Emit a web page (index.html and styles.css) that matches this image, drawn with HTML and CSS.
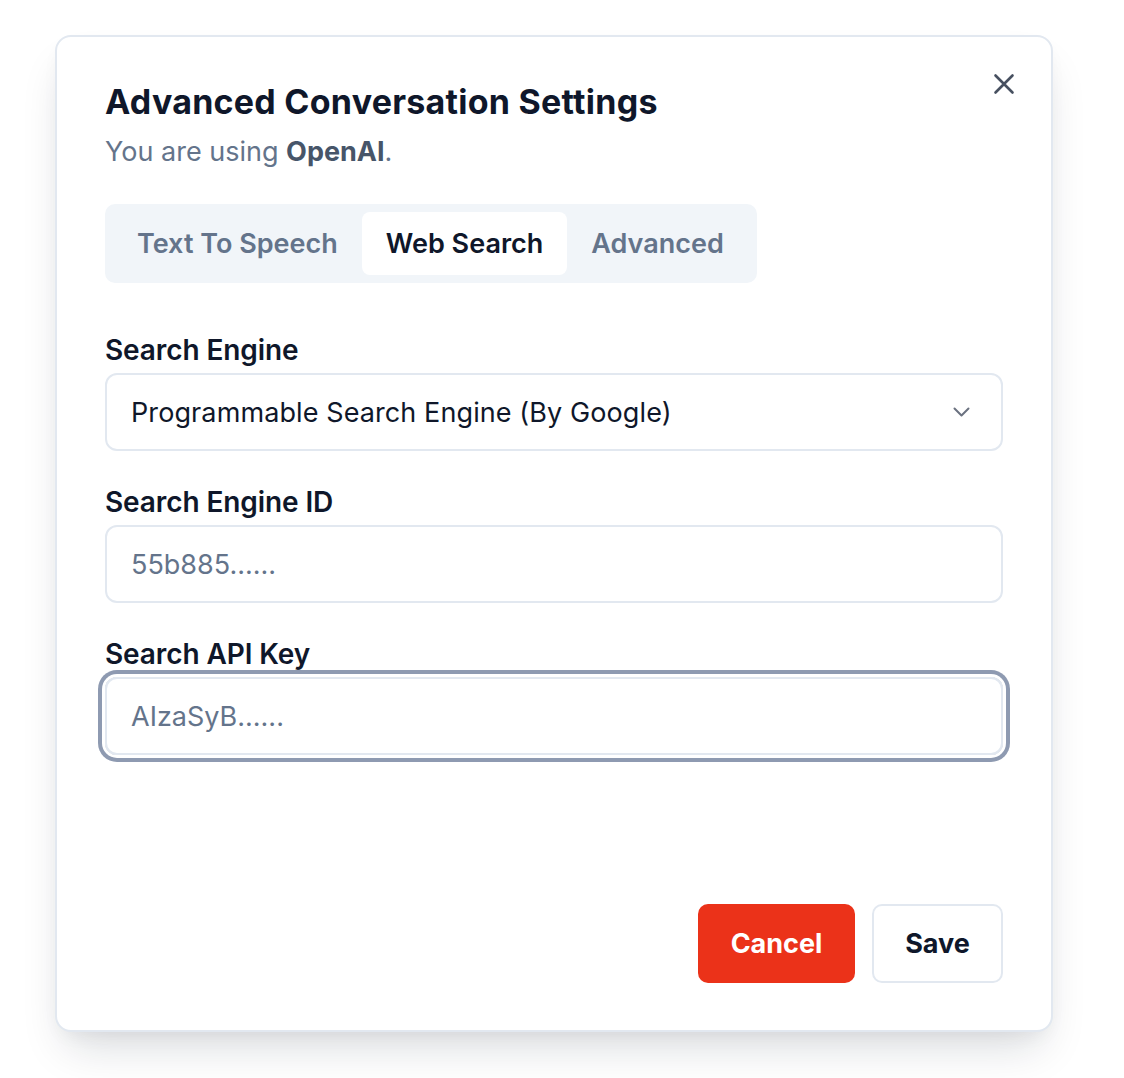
FILE: index.html
```html
<!DOCTYPE html>
<html lang="en">
<head>
<meta charset="utf-8">
<title>Advanced Conversation Settings</title>
<link rel="stylesheet" href="styles.css">
</head>
<body>
<div class="page">
  <div class="dialog">
    <button class="close" aria-label="Close">
      <svg width="22" height="22" viewBox="0 0 22 22" fill="none" stroke="currentColor" stroke-width="2.6" stroke-linecap="round"><path d="M2.5 2.5L19.5 19.5M19.5 2.5L2.5 19.5"/></svg>
    </button>
    <h1 class="title">Advanced Conversation Settings</h1>
    <p class="subtitle">You are using <strong>OpenAI</strong>.</p>
    <div class="tabs">
      <span class="tab">Text To Speech</span>
      <span class="tab tab-active">Web Search</span>
      <span class="tab">Advanced</span>
    </div>
    <div class="field">
      <label class="label">Search Engine</label>
      <div class="control select">
        <span class="value">Programmable Search Engine (By Google)</span>
        <svg class="chevron" width="17" height="10" viewBox="0 0 17 10" fill="none" stroke="currentColor" stroke-width="2" stroke-linecap="round" stroke-linejoin="round"><path d="M1.5 1.5L8.5 8.5L15.5 1.5"/></svg>
      </div>
    </div>
    <div class="field">
      <label class="label">Search Engine ID</label>
      <div class="control"><span class="placeholder">55b885......</span></div>
    </div>
    <div class="field">
      <label class="label">Search API Key</label>
      <div class="control focused"><span class="placeholder">AIzaSyB......</span></div>
    </div>
    <div class="actions">
      <button class="btn btn-cancel">Cancel</button>
      <button class="btn btn-save">Save</button>
    </div>
  </div>
</div>
</body>
</html>
```

FILE: styles.css
```css
* { box-sizing: border-box; }
html, body { margin: 0; padding: 0; background: #ffffff; }
body { font-family: Inter, "Noto Sans", "Liberation Sans", sans-serif; color: #0f172a; }

.page {
  padding: 35px 0 0 55px;
  height: 1078px;
}

.dialog {
  position: relative;
  width: 998px;
  height: 997px;
  background: #fff;
  border: 2px solid #e2e8f0;
  border-radius: 16px;
  padding: 45px 48px 47px 48px;
  display: flex;
  flex-direction: column;
  box-shadow: 0 25px 45px -12px rgba(15, 23, 42, 0.16), 0 8px 20px -6px rgba(15, 23, 42, 0.06);
}

.close {
  position: absolute;
  top: 33px;
  right: 33px;
  width: 28px;
  height: 28px;
  padding: 0;
  border: 0;
  background: none;
  color: #475060;
  display: flex;
  align-items: center;
  justify-content: center;
}

.title {
  margin: 0;
  font-size: 34px;
  line-height: 40px;
  font-weight: 700;
  letter-spacing: 0.25px;
  color: #0f172a;
}

.subtitle {
  margin: 13px 0 0 0;
  font-size: 27px;
  line-height: 34px;
  color: #64748b;
}
.subtitle strong { font-weight: 700; color: #475569; }

.tabs {
  margin-top: 35px;
  align-self: flex-start;
  display: flex;
  background: #f1f5f9;
  border-radius: 10px;
  padding: 8px;
  height: 79px;
}
.tab {
  display: flex;
  align-items: center;
  padding: 0 24px;
  font-size: 27px;
  font-weight: 600;
  color: #64748b;
  border-radius: 8px;
}
.tab:last-child { padding-right: 25px; }
.tab-active {
  background: #fff;
  color: #0f172a;
}

.field { display: flex; flex-direction: column; }
.tabs + .field { margin-top: 50px; }
.field + .field { margin-top: 34px; }

.label {
  font-size: 28px;
  line-height: 34px;
  font-weight: 600;
  color: #0f172a;
  letter-spacing: -0.1px;
}

.control {
  margin-top: 6px;
  height: 78px;
  border: 2px solid #e2e8f0;
  border-radius: 12px;
  display: flex;
  align-items: center;
  padding: 0 24px;
  font-size: 27px;
}
.select { justify-content: space-between; padding-right: 31px; }
.value { color: #0f172a; letter-spacing: 0.1px; }
.chevron { color: #6b7280; }
.placeholder { color: #64748b; }
.focused {
  box-shadow: 0 0 0 3px #ffffff, 0 0 0 7px #8e9ab1;
}

.actions {
  margin-top: auto;
  display: flex;
  justify-content: flex-end;
  gap: 17px;
}
.btn {
  height: 79px;
  border-radius: 10px;
  font-family: inherit;
  font-size: 27px;
  font-weight: 700;
  padding: 0;
  cursor: pointer;
}
.btn-cancel {
  background: #eb3219;
  color: #fff;
  border: 0;
  width: 157px;
}
.btn-save {
  background: #fff;
  color: #0f172a;
  border: 2px solid #e2e8f0;
  width: 131px;
}
```
